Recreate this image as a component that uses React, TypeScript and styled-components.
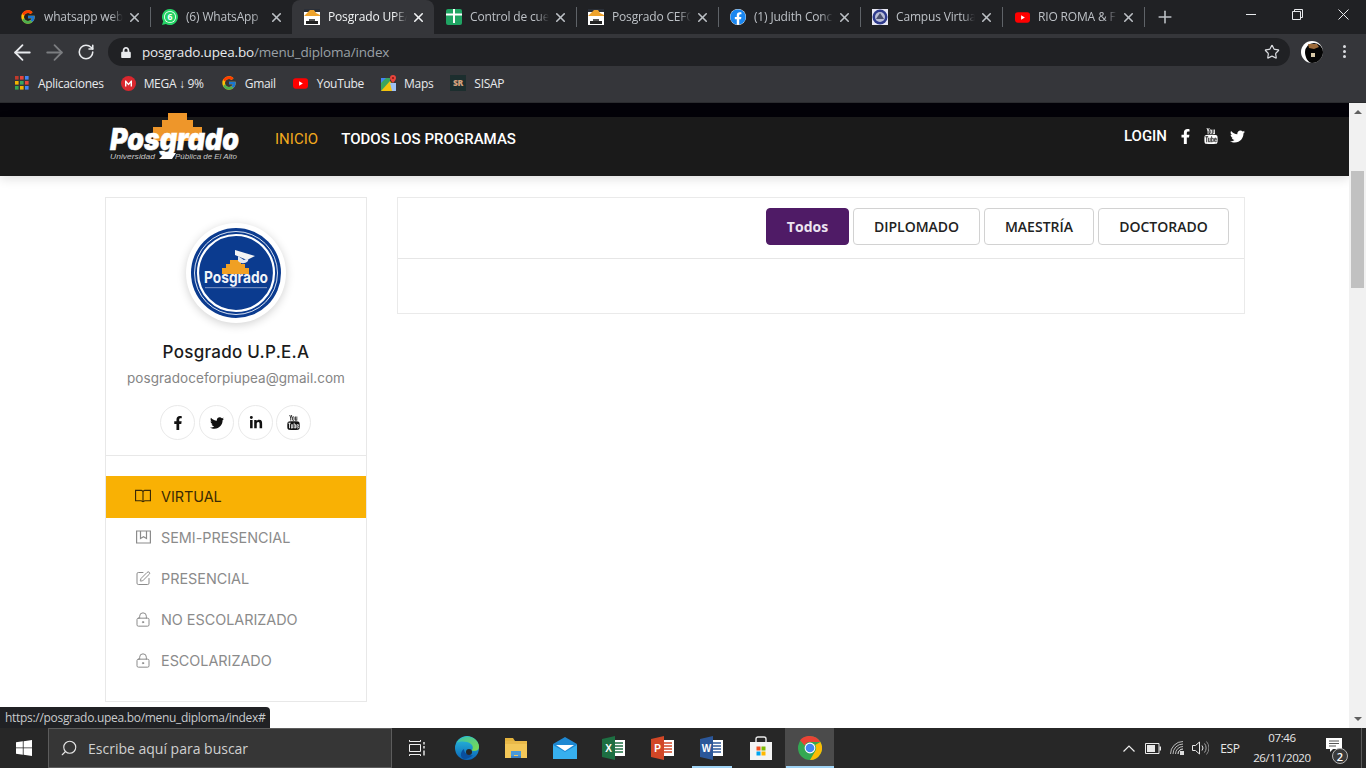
import React from "react";
import styled, { createGlobalStyle } from "styled-components";
import { ArrowLeft, ArrowRight, RotateCw, Star, X, Plus, SquarePen, LockKeyhole, Search } from "lucide-react";
import { FaFacebookF, FaTwitter, FaLinkedinIn, FaFacebook, FaLock } from "react-icons/fa";
import { FcGoogle } from "react-icons/fc";
import { TfiYoutube } from "react-icons/tfi";

const Global = createGlobalStyle`
  html, body { margin: 0; padding: 0; overflow: hidden; background: #fff; }
  * { box-sizing: border-box; }
`;

const Screen = styled.div`
  width: 1366px; height: 768px; display: flex; flex-direction: column; overflow: hidden;
  font-family: "Open Sans", "Liberation Sans", sans-serif;
`;

/* ---------- Browser chrome ---------- */
const TabStrip = styled.div`
  height: 34px; background: #202124; display: flex; padding-left: 8px; flex: none; align-items: stretch;
`;
const Tab = styled.div<{ $active?: boolean; $sep?: boolean }>`
  position: relative; width: 142px; display: flex; align-items: center; padding: 0 8px 0 12px; gap: 8px;
  background: ${p => (p.$active ? "#35363a" : "transparent")};
  border-radius: ${p => (p.$active ? "8px 8px 0 0" : "0")};
  color: ${p => (p.$active ? "#f1f3f4" : "#bdc1c6")};
  &::after {
    content: ""; display: ${p => (p.$sep ? "block" : "none")}; position: absolute; right: -1px; top: 7px; width: 1px; height: 20px; background: #5f6368;
  }
`;
const FavSlot = styled.span`
  width: 16px; height: 16px; flex: none; display: flex; align-items: center; justify-content: center;
`;
const TabTitle = styled.span`
  flex: 1; min-width: 0; white-space: nowrap; overflow: hidden; font-size: 12px; line-height: 16px; letter-spacing: -0.17px;
  -webkit-mask-image: linear-gradient(90deg, #000 84%, transparent 100%);
  mask-image: linear-gradient(90deg, #000 84%, transparent 100%);
`;
const TabClose = styled(X)`
  flex: none; width: 15px; height: 15px; stroke-width: 2.5px; margin-left: -4px;
`;
const NewTab = styled(Plus)`
  margin: 7px 0 0 11px; width: 20px; height: 20px; color: #bdc1c6; stroke-width: 1.9px;
`;
const WindowControls = styled.div`
  margin-left: auto; display: flex; color: #e8eaed;
`;
const WinButton = styled.span`
  width: 46px; height: 28px; display: flex; align-items: center; justify-content: center;
`;

const Toolbar = styled.div`
  height: 32px; background: #35363a; flex: none; display: flex; align-items: flex-end; color: #dadce0; padding-left: 6px;
`;
const NavIconButton = styled.span<{ $dim?: boolean }>`
  width: 32px; height: 28px; display: flex; align-items: center; justify-content: center; color: ${p => (p.$dim ? "#7b7d80" : "#e8eaed")};
`;
const Omnibox = styled.div`
  width: 1182px; margin-left: 6px; height: 28px; background: #202124; border-radius: 14px; display: flex; align-items: center; padding: 0 10px 0 13px;
`;
const LockIcon = styled(FaLock)`
  width: 10px; height: 11px; color: #e8eaed; margin-right: 11px; flex: none;
`;
const UrlText = styled.span`
  font-size: 13.5px; letter-spacing: -0.17px; margin-top: -1px; white-space: nowrap;
`;
const Host = styled.span`
  color: #e8eaed;
`;
const Path = styled.span`
  color: #9aa0a6;
`;
const StarIcon = styled(Star)`
  margin-left: auto; width: 16px; height: 16px; color: #dadce0; stroke-width: 1.8px;
`;
const ProfileDot = styled.span`
  margin: 0 0 3px 11px; flex: none; display: flex;
`;
const MenuDots = styled.span`
  margin: 0 0 8px 20px; display: flex; flex-direction: column; gap: 2px;
  i { width: 3px; height: 3px; border-radius: 50%; background: #dadce0; display: block; }
`;

const BookmarkBar = styled.div`
  height: 37px; background: #35363a; flex: none; display: flex; align-items: center; padding: 0 0 2px 15px; gap: 17px; border-bottom: 1px solid #2b2c2f;
`;
const Bookmark = styled.span<{ $gap: number }>`
  display: flex; align-items: center; gap: ${p => p.$gap}px; font-size: 12px; color: #e8eaed; letter-spacing: -0.3px;
`;

/* ---------- Page ---------- */
const Viewport = styled.div`
  position: relative; flex: 1; min-height: 0; display: flex;
`;
const Page = styled.div`
  flex: 1; min-width: 0; background: #fff; display: flex; flex-direction: column; font-family: Inter, "Liberation Sans", sans-serif;
`;
const TopStrip = styled.div`
  height: 14px; background: #030208; flex: none;
`;
const NavBar = styled.div`
  height: 59px; background: #1a1a1a; display: flex; align-items: flex-start; padding: 0 104px 0 109px; flex: none; box-shadow: 0 3px 10px rgba(0,0,0,.12);
`;
const LogoSvg = styled.svg`
  margin-top: -5px; flex: none; overflow: visible;
`;
const NavLinks = styled.div`
  margin-left: 35px; height: 44px; display: flex; align-items: center; gap: 23px;
`;
const NavLink = styled.span<{ $active?: boolean }>`
  font-family: Roboto, sans-serif; font-size: 15px; font-weight: ${p => (p.$active ? 400 : 500)}; color: ${p => (p.$active ? "#f2aa1e" : "#fff")}; letter-spacing: 0.03px;
`;
const NavRight = styled.div`
  margin-left: auto; height: 38px; display: flex; align-items: center; color: #fff;
`;
const LoginLink = styled.span`
  font-family: Roboto, sans-serif; font-size: 15px; font-weight: 500; margin-right: 6px;
`;
const NavSocial = styled.span`
  display: flex; width: 25px; justify-content: center; &:last-child { margin-left: 6px; width: 16px; }
`;

const Main = styled.div`
  flex: 1; display: flex; align-items: flex-start; gap: 30px; padding: 21px 0 0 105px; overflow: hidden;
`;
const Sidebar = styled.aside`
  width: 262px; flex: none; border: 1px solid #e8e8e8; background: #fff;
`;
const Profile = styled.div`
  display: flex; flex-direction: column; align-items: center; padding: 25px 0 15px; border-bottom: 1px solid #e8e8e8;
`;
const Avatar = styled.div`
  width: 100px; height: 100px; border-radius: 50%; background: #fff; display: flex; align-items: center; justify-content: center;
  box-shadow: 0 2px 10px rgba(0,0,0,.18);
`;
const Name = styled.div`
  margin-top: 18px; font-size: 17px; line-height: 22px; font-weight: 500; color: #1b1b1b; letter-spacing: 0.28px;
`;
const Email = styled.div`
  margin-top: 5px; font-size: 13.5px; line-height: 20px; color: #858585; letter-spacing: 0.05px;
`;
const Socials = styled.div`
  margin-top: 17px; display: flex; gap: 4px; margin-left: -1px;
`;
const SocialCircle = styled.span`
  width: 35px; height: 35px; border: 1px solid #e9e9e9; border-radius: 50%; display: flex; align-items: center; justify-content: center; color: #111;
  &:last-child { margin-left: -1px; }
`;
const Menu = styled.nav`
  padding: 20px 0 19px;
`;
const MenuRow = styled.div<{ $active?: boolean }>`
  height: ${p => (p.$active ? 42 : 41)}px; display: flex; align-items: center; padding: 0 0 2px 29px; gap: 10px;
  background: ${p => (p.$active ? "#f9b104" : "transparent")};
  color: ${p => (p.$active ? "#3a2a05" : "#8b8b8b")};
  font-size: 14.4px; letter-spacing: -0.02px;
`;
const MenuIcon = styled.span`
  width: 16px; height: 18px; display: flex; align-items: center; justify-content: center; flex: none; margin-top: -1px;
`;
const Panel = styled.section`
  width: 848px; height: 117px; flex: none; border: 1px solid #eaeaea; background: #fff;
`;
const PanelHead = styled.div`
  height: 61px; border-bottom: 1px solid #e6e6e6; display: flex; justify-content: flex-end; align-items: flex-start; gap: 4px; padding: 10px 15px 0 0;
`;
const FilterButton = styled.button<{ $w: number; $active?: boolean }>`
  width: ${p => p.$w}px; height: 37px; border-radius: 4px; padding: 0; font-family: "Open Sans", sans-serif; font-size: 14px;
  font-weight: ${p => (p.$active ? 700 : 600)};
  background: ${p => (p.$active ? "#4f1b66" : "#fff")};
  color: ${p => (p.$active ? "#ece4f0" : "#222")};
  border: 1px solid ${p => (p.$active ? "#4f1b66" : "#d2d2d2")};
`;

const Scrollbar = styled.div`
  width: 17px; flex: none; background: #f1f1f1; display: flex; flex-direction: column; align-items: center; position: relative;
`;
const ArrowUp = styled.span`
  margin-top: 7px; width: 0; height: 0; border-left: 4px solid transparent; border-right: 4px solid transparent; border-bottom: 4px solid #606060;
`;
const Thumb = styled.div`
  margin-top: 57px; width: 13px; height: 117px; background: #c1c1c1;
`;
const ArrowDown = styled.span`
  margin-top: auto; margin-bottom: 7px; width: 0; height: 0; border-left: 4px solid transparent; border-right: 4px solid transparent; border-top: 4px solid #606060;
`;
const StatusBubble = styled.div`
  position: absolute; left: 0; bottom: 0; width: 270px; height: 21px; background: #202124; border-top-right-radius: 4px;
  color: #c8cacc; font-size: 12px; line-height: 21px; padding-left: 5px; white-space: nowrap; letter-spacing: -0.3px;
`;

/* ---------- Taskbar ---------- */
const Taskbar = styled.div`
  height: 40px; flex: none; background: #272727; display: flex; align-items: stretch; color: #fff;
`;
const StartButton = styled.span`
  width: 48px; display: flex; align-items: center; justify-content: center; flex: none;
`;
const SearchBox = styled.div`
  width: 344px; flex: none; margin-right: 1px; background: #363636; border: 1px solid #5c5c5c; display: flex; align-items: center; padding-left: 11px; gap: 10px;
  color: #d0d0d0; font-size: 14px;
`;
const SearchIcon = styled(Search)`
  width: 18px; height: 18px; transform: scaleX(-1); color: #e5e5e5; stroke-width: 1.5px;
`;
const TaskButton = styled.span<{ $active?: boolean; $open?: boolean }>`
  position: relative; width: 49px; display: flex; align-items: center; justify-content: center; flex: none;
  background: ${p => (p.$active ? "#4b4b4b" : "transparent")};
  &::after {
    content: ""; display: ${p => (p.$open || p.$active ? "block" : "none")}; position: absolute; bottom: 0; height: 2px; background: #9fd3f5;
    left: ${p => (p.$active ? "1px" : "5px")}; right: ${p => (p.$active ? "0" : "4px")};
  }
`;
const Tray = styled.div`
  margin-left: auto; display: flex; align-items: center; color: #e8e8e8;
`;
const TrayIcon = styled.span<{ $w: number }>`
  width: ${p => p.$w}px; display: flex; justify-content: center; align-items: center;
`;
const Lang = styled.span`
  width: 38px; text-align: center; font-size: 12px; letter-spacing: -0.3px;
`;
const Clock = styled.div`
  width: 64px; margin-left: 1px; text-align: center; font-size: 11.5px; line-height: 20px; letter-spacing: -0.33px;
`;
const Notify = styled.span`
  position: relative; width: 47px; height: 40px; display: flex; align-items: center; justify-content: center;
`;
const NotifyBadge = styled.span`
  position: absolute; left: 18px; top: 20px; width: 16px; height: 16px; border-radius: 50%; background: #3a3a3a; border: 1px solid #b5b5b5;
  display: flex; align-items: center; justify-content: center; font-size: 11px; font-weight: 600; color: #fff;
`;
const ShowDesktop = styled.span`
  width: 5px; height: 40px; border-left: 1px solid #5a5a5a;
`;

/* ---------- Icons ---------- */
const PosgradoFav = () => (
  <svg width="16" height="16" viewBox="0 0 16 16">
    <rect width="16" height="16" fill="#fff" />
    <rect width="16" height="3" fill="#2a2f38" />
    <path d="M0 7 6 1h4l2 3 4 2v1Z" fill="#eea32c" />
    <rect x="2" y="12" width="12" height="3" fill="#222" />
    <rect x="5" y="10" width="6" height="2" fill="#555" />
  </svg>
);
const SheetFav = () => (
  <svg width="16" height="16" viewBox="0 0 16 16">
    <rect width="16" height="16" rx="2" fill="#1fa463" />
    <path d="M0 4.500h16v2H9V14H7V6.500H0Z" fill="#fff" />
    <rect x="7" y="0" width="2" height="5" fill="#fff" />
  </svg>
);
const WhatsFav = () => (
  <svg width="16" height="16" viewBox="0 0 16 16">
    <path d="M8 0a8 8 0 0 0-6.800 12.200L0 16l3.900-1.100A8 8 0 1 0 8 0Z" fill="#25d366" />
    <circle cx="8" cy="8" r="6" fill="#fff" />
    <circle cx="8" cy="8" r="5.200" fill="#25d366" />
    <text x="8" y="11" fontSize="8.500" fontWeight="700" textAnchor="middle" fill="#fff" fontFamily="Open Sans">6</text>
  </svg>
);
const CampusFav = () => (
  <svg width="16" height="16" viewBox="0 0 16 16">
    <rect width="16" height="16" fill="#e8e8f4" />
    <circle cx="8" cy="8" r="7.500" fill="#2e3a8c" />
    <circle cx="8" cy="8" r="5" fill="#b9bdd6" />
    <path d="M4 10 8 4l4 6Z" fill="#4a4f70" />
  </svg>
);
const YoutubeFav = ({ w = 16 }: { w?: number }) => (
  <svg width={w} height="16" viewBox="0 0 16 16">
    <rect x="0" y="3" width="16" height="11" rx="3" fill="#f00" />
    <path d="M6.500 6v5l4-2.500Z" fill="#fff" />
  </svg>
);
const FacebookFav = () => <FaFacebook size={16} color="#1a87f0" style={{ background: "#fff", borderRadius: "50%" }} />;
const AppsIcon = () => (
  <svg width="14" height="14" viewBox="0 0 14 14">
    {[0, 5, 10].flatMap(y =>
      [0, 5, 10].map(x => (
        <rect key={`${x}${y}`} x={x} y={y} width="3.600" height="3.600"
          fill={y === 0 ? (x === 5 ? "#e8453c" : x === 10 ? "#4285f4" : "#c0392b") : y === 5 ? (x === 0 ? "#f4b400" : x === 5 ? "#3ba55d" : "#e8453c") : x === 0 ? "#34a853" : x === 5 ? "#f4b400" : "#4285f4"} />
      ))
    )}
  </svg>
);
const MegaIcon = () => (
  <svg width="15" height="15" viewBox="0 0 15 15">
    <circle cx="7.500" cy="7.500" r="7.500" fill="#d9272e" />
    <path d="M4 10.500v-6h1l2.500 3 2.500-3h1v6H9.600V7L7.500 9.400 5.400 7v3.500Z" fill="#fff" />
  </svg>
);
const MapsIcon = () => (
  <svg width="15" height="16" viewBox="0 0 15 16">
    <path d="M0 3h9v13H0Z" fill="#3ba55d" />
    <path d="M0 16 9 6l6 7v3Z" fill="#f4c20d" />
    <path d="M0 3h5L0 8Z" fill="#4285f4" />
    <path d="M9 8h6v8h-4Z" fill="#9ec1f5" />
    <path d="M12 0a3 3 0 0 0-3 3c0 2 3 5 3 5s3-3 3-5a3 3 0 0 0-3-3Z" fill="#e8453c" />
    <circle cx="12" cy="3" r="1.100" fill="#8b1a14" />
  </svg>
);
const SisapIcon = () => (
  <svg width="16" height="16" viewBox="0 0 16 16">
    <rect width="16" height="16" fill="#1c2e2e" />
    <text x="8" y="11" fontSize="8.500" fontWeight="800" textAnchor="middle" fill="#d2a07c" fontFamily="Open Sans">SR</text>
  </svg>
);
const AvatarSmall = () => (
  <svg width="22" height="22" viewBox="0 0 22 22">
    <circle cx="11" cy="11" r="11" fill="#fff" />
    <path d="M4 11a9 9 0 0 1 18 0 11 11 0 0 1-11 11C7 22 4 16 4 11Z" fill="#050505" />
    <path d="M7 3h9l2 3-5 2-5-1Z" fill="#9b6a3a" />
    <rect x="10" y="12" width="4" height="4" fill="#d8c8a8" />
  </svg>
);
const RestoreIcon = () => (
  <svg width="11" height="11" viewBox="0 0 11 11" fill="none" stroke="currentColor">
    <path d="M.5 2.500h8v8h-8ZM2.500 2.500v-2h8v8h-2" />
  </svg>
);
const MinimizeIcon = () => (
  <svg width="10" height="1" viewBox="0 0 10 1"><rect width="10" height="1" fill="currentColor" /></svg>
);
const CloseIcon = () => (
  <svg width="11" height="11" viewBox="0 0 11 11" stroke="currentColor"><path d="M.5.500l10 10M10.500.500l-10 10" /></svg>
);
const WindowsLogo = () => (
  <svg width="16" height="16" viewBox="0 0 16 16" fill="#fff">
    <path d="M0 2.300 6.800 1.300v6.200H0ZM7.600 1.200 16 0v7.500H7.600ZM0 8.300h6.800v6.400L0 13.700ZM7.600 8.300H16V16l-8.400-1.200Z" />
  </svg>
);
const OpenBook = () => (
  <svg width="17" height="14" viewBox="0 0 17 14" fill="none" stroke="currentColor" strokeWidth="1.200">
    <path d="M.6 1h6.200l1.700 1 1.700-1h6.200v11h-6l-1.900 1-1.900-1h-6Z" />
    <path d="M8.500 2v11" />
  </svg>
);
const SemiBook = () => (
  <svg width="15" height="15" viewBox="0 0 15 15" fill="none" stroke="currentColor" strokeWidth="1.200">
    <path d="M.6 1h13.800v12H.6Z" />
    <path d="M4.500 1v7.500L7.500 6.800l3 1.700V1" />
  </svg>
);

const Logo = () => (
  <LogoSvg width="131" height="50" viewBox="0 0 131 50">
    <path d="M59 1h19v7h6v7h9v14H44V15h9V8h6Z" fill="#ee962a" />
    <text x="1" y="38" textLength="129" lengthAdjust="spacingAndGlyphs" fontFamily="Inter" fontStyle="italic" fontWeight="900" fontSize="30" fill="#fff" stroke="#fff" strokeWidth=".5">Posgrado</text>
    <text x="1" y="47" fontFamily="Liberation Sans" fontStyle="italic" fontSize="7.500" textLength="45" lengthAdjust="spacingAndGlyphs" fill="#c8c8c8">Universidad</text>
    <text x="66" y="47" fontFamily="Liberation Sans" fontStyle="italic" fontSize="7.500" textLength="62" lengthAdjust="spacingAndGlyphs" fill="#c8c8c8">Pública de El Alto</text>
    <path d="M50 47h13l4-6H56Z" fill="#fff" />
  </LogoSvg>
);
const AvatarLogo = () => (
  <svg width="90" height="90" viewBox="0 0 90 90">
    <circle cx="45" cy="45" r="45" fill="#0b3b8f" />
    <circle cx="45" cy="45" r="41.500" fill="none" stroke="#d9e2f2" strokeWidth="1" />
    <circle cx="45" cy="45" r="38" fill="none" stroke="#fff" strokeWidth="2.200" />
    <path d="M31 46v-6h4v-4h4v-4h11v4h4v4h4v6Z" fill="#f0a024" />
    <path d="M44 22l20 6-8 4-12-5Z" fill="#f4f4f4" />
    <path d="M47 28v5c3 3 7 3 10 0l.4-3-4.500 2Z" fill="#e4e8f0" />
    <text x="45" y="55" textAnchor="middle" textLength="64" lengthAdjust="spacingAndGlyphs" fontFamily="Inter" fontWeight="700" fontSize="15.500" fill="#f2f4f8">Posgrado</text>
    <rect x="14" y="59" width="62" height="1.200" fill="#6b86bc" />
  </svg>
);

const EdgeIcon = () => (
  <svg width="24" height="24" viewBox="0 0 24 24">
    <defs>
      <linearGradient id="edgeA" x1="0" y1="0" x2="0" y2="1"><stop offset="0" stopColor="#2ac0dd" /><stop offset="1" stopColor="#0b64b8" /></linearGradient>
      <linearGradient id="edgeB" x1="0" y1="0" x2="1" y2="1"><stop offset="0" stopColor="#37c2b0" /><stop offset="1" stopColor="#7fdc4a" /></linearGradient>
    </defs>
    <circle cx="12" cy="12" r="12" fill="url(#edgeA)" />
    <path d="M2 7C5 1 13-1 19 2.500c4 2.500 6 7 4.500 10.500-1 2-5 2.500-7 1.500 2-2 1.500-5-.5-6.500C12 5 5 5 2 7Z" fill="url(#edgeB)" />
    <path d="M9 13c0 4 4 7 9 6-3 3.500-9 5-11 3-2-3-1-7 2-9Z" fill="#0a4f9e" />
    <circle cx="14" cy="16" r="3" fill="#272727" />
  </svg>
);
const FolderIcon = () => (
  <svg width="24" height="20" viewBox="0 0 24 20">
    <path d="M1 0h8l2 3H1Z" fill="#e4b33d" />
    <rect x="1" y="3" width="22" height="17" fill="#f3c758" />
    <rect x="1" y="3" width="22" height="3" fill="#e9b949" />
    <path d="M7 20v-7h10v7h-3v-3h-4v3Z" fill="#4a9ad8" />
    <rect x="7" y="18" width="10" height="2" fill="#3b82c4" />
  </svg>
);
const MailIcon = () => (
  <svg width="24" height="22" viewBox="0 0 24 22">
    <path d="M12 0 24 7v15H0V7Z" fill="#1e88d2" />
    <path d="M3 8h18l-9 6Z" fill="#fff" />
    <path d="M0 8l12 7 12-7v14H0Z" fill="#37b0ef" />
  </svg>
);
const OfficeIcon = ({ color, letter, lines }: { color: string; letter: string; lines: string }) => (
  <svg width="24" height="24" viewBox="0 0 24 24">
    <rect x="10" y="4" width="13" height="16" fill="#fff" />
    <path d="M12 7h9M12 10h9M12 13h9M12 16h9" stroke={lines} strokeWidth="1.400" />
    <path d="M0 3 13 0v24L0 21Z" fill={color} />
    <text x="6.500" y="16" textAnchor="middle" fontFamily="Liberation Sans" fontWeight="700" fontSize="10" fill="#fff">{letter}</text>
  </svg>
);
const StoreIcon = () => (
  <svg width="24" height="24" viewBox="0 0 24 24">
    <path d="M7 6V3a2 2 0 0 1 2-2h6a2 2 0 0 1 2 2v3" fill="none" stroke="#e9e9e9" strokeWidth="1.400" />
    <path d="M1 6h22v18H1Z" fill="#f4f4f4" />
    <rect x="7.500" y="10.500" width="4" height="4" fill="#f25022" />
    <rect x="12.500" y="10.500" width="4" height="4" fill="#7fba00" />
    <rect x="7.500" y="15.500" width="4" height="4" fill="#00a4ef" />
    <rect x="12.500" y="15.500" width="4" height="4" fill="#ffb900" />
  </svg>
);
const ChromeIcon = () => (
  <svg width="24" height="24" viewBox="0 0 24 24">
    <circle cx="12" cy="12" r="12" fill="#34a853" />
    <path d="M12 0a12 12 0 0 1 10.400 6H12a6 6 0 0 0-5.400 3.400L2 4.300A12 12 0 0 1 12 0Z" fill="#ea4335" />
    <path d="M22.400 6A12 12 0 0 1 12 24l5-8.500A6 6 0 0 0 17.200 9Z" fill="#fbbc05" />
    <circle cx="12" cy="12" r="5.400" fill="#fff" />
    <circle cx="12" cy="12" r="4.300" fill="#4285f4" />
  </svg>
);
const TaskViewIcon = () => (
  <svg width="17" height="16" viewBox="0 0 17 16" fill="none" stroke="#eee">
    <path d="M.5 0v1.500h11V0M.5 16v-1.500h11V16M.5 4.500h11v7H.5Z" />
    <path d="M15 2v2.500M15 6v2.500M15 10.500v5" strokeWidth="1.400" />
  </svg>
);
const BatteryIcon = () => (
  <svg width="16" height="11" viewBox="0 0 16 11">
    <path d="M.5.500h13.500v10H.5Z" fill="none" stroke="#e8e8e8" />
    <rect x="2" y="2" width="8" height="7" fill="#e8e8e8" />
    <rect x="14.500" y="3.500" width="1.500" height="4" fill="#e8e8e8" />
  </svg>
);
const WifiIcon = () => (
  <svg width="14" height="14" viewBox="0 0 14 14" fill="none" stroke="#bbb" strokeWidth="1">
    <path d="M.5 13A12.500 12.500 0 0 1 13 .5M3 13A10 10 0 0 1 13 3M5.500 13A7.500 7.500 0 0 1 13 5.500" />
    <path d="M8 13a5 5 0 0 1 5-5" stroke="#eee" />
    <rect x="10" y="10" width="4" height="4" fill="#ddd" stroke="none" />
  </svg>
);
const VolumeIcon = () => (
  <svg width="17" height="14" viewBox="0 0 17 14" fill="none" stroke="#e8e8e8">
    <path d="M.5 4.500h3L7.500 1v12l-4-3.500h-3Z" />
    <path d="M10 4.500a4 4 0 0 1 0 5" />
    <path d="M12.500 2.500a7 7 0 0 1 0 9" stroke="#aaa" />
    <path d="M14.500.5a10 10 0 0 1 0 13" stroke="#888" />
  </svg>
);
const ChevronTray = () => (
  <svg width="12" height="7" viewBox="0 0 12 7" fill="none" stroke="#eee" strokeWidth="1.200"><path d="M.5 6.500 6 1l5.500 5.500" /></svg>
);
const NotifyIcon = () => (
  <svg width="16" height="14" viewBox="0 0 16 14" style={{ marginTop: -6, marginLeft: -8 }}>
    <path d="M0 0h16v11H7l-3 3v-3H0Z" fill="#fff" />
    <path d="M3 3h10M3 5.500h10M3 8h7" stroke="#555" />
  </svg>
);

const tabs: { title: string; icon: React.ReactNode; active?: boolean; sep?: boolean }[] = [
  { title: "whatsapp web", icon: <FcGoogle size={16} />, sep: true },
  { title: "(6) WhatsApp", icon: <WhatsFav /> },
  { title: "Posgrado UPEA", icon: <PosgradoFav />, active: true },
  { title: "Control de cue", icon: <SheetFav />, sep: true },
  { title: "Posgrado CEFC", icon: <PosgradoFav />, sep: true },
  { title: "(1) Judith Conc", icon: <FacebookFav />, sep: true },
  { title: "Campus Virtua", icon: <CampusFav />, sep: true },
  { title: "RIO ROMA & F", icon: <YoutubeFav w={15} />, sep: true },
];
const bookmarks: { label: string; icon: React.ReactNode; gap: number }[] = [
  { label: "Aplicaciones", icon: <AppsIcon />, gap: 9 },
  { label: "MEGA ↓ 9%", icon: <MegaIcon />, gap: 8 },
  { label: "Gmail", icon: <FcGoogle size={16} />, gap: 8 },
  { label: "YouTube", icon: <YoutubeFav w={15} />, gap: 9 },
  { label: "Maps", icon: <MapsIcon />, gap: 8 },
  { label: "SISAP", icon: <SisapIcon />, gap: 8 },
];
const menu: { label: string; icon: React.ReactNode; active?: boolean }[] = [
  { label: "VIRTUAL", icon: <OpenBook />, active: true },
  { label: "SEMI-PRESENCIAL", icon: <SemiBook /> },
  { label: "PRESENCIAL", icon: <SquarePen size={17} strokeWidth={1.5} /> },
  { label: "NO ESCOLARIZADO", icon: <LockKeyhole size={17} strokeWidth={1.5} /> },
  { label: "ESCOLARIZADO", icon: <LockKeyhole size={17} strokeWidth={1.5} /> },
];
const filters = [
  { label: "Todos", w: 83, active: true },
  { label: "DIPLOMADO", w: 127 },
  { label: "MAESTRÍA", w: 110 },
  { label: "DOCTORADO", w: 131 },
];

export default function App() {
  return (
    <Screen>
      <Global />
      <TabStrip>
        {tabs.map(t => (
          <Tab key={t.title} $active={t.active} $sep={t.sep}>
            <FavSlot>{t.icon}</FavSlot>
            <TabTitle>{t.title}</TabTitle>
            <TabClose />
          </Tab>
        ))}
        <NewTab />
        <WindowControls>
          <WinButton><MinimizeIcon /></WinButton>
          <WinButton><RestoreIcon /></WinButton>
          <WinButton><CloseIcon /></WinButton>
        </WindowControls>
      </TabStrip>
      <Toolbar>
        <NavIconButton><ArrowLeft size={25} strokeWidth={1.7} /></NavIconButton>
        <NavIconButton $dim><ArrowRight size={25} strokeWidth={1.7} /></NavIconButton>
        <NavIconButton><RotateCw size={18} strokeWidth={2.1} /></NavIconButton>
        <Omnibox>
          <LockIcon />
          <UrlText><Host>posgrado.upea.bo</Host><Path>/menu_diploma/index</Path></UrlText>
          <StarIcon />
        </Omnibox>
        <ProfileDot><AvatarSmall /></ProfileDot>
        <MenuDots><i /><i /><i /></MenuDots>
      </Toolbar>
      <BookmarkBar>
        {bookmarks.map(b => (
          <Bookmark key={b.label} $gap={b.gap}>{b.icon}{b.label}</Bookmark>
        ))}
      </BookmarkBar>
      <Viewport>
        <Page>
          <TopStrip />
          <NavBar>
            <Logo />
            <NavLinks>
              <NavLink $active>INICIO</NavLink>
              <NavLink>TODOS LOS PROGRAMAS</NavLink>
            </NavLinks>
            <NavRight>
              <LoginLink>LOGIN</LoginLink>
              <NavSocial><FaFacebookF size={15} /></NavSocial>
              <NavSocial><TfiYoutube size={16} /></NavSocial>
              <NavSocial><FaTwitter size={15} /></NavSocial>
            </NavRight>
          </NavBar>
          <Main>
            <Sidebar>
              <Profile>
                <Avatar><AvatarLogo /></Avatar>
                <Name>Posgrado U.P.E.A</Name>
                <Email>posgradoceforpiupea@gmail.com</Email>
                <Socials>
                  <SocialCircle><FaFacebookF size={14} /></SocialCircle>
                  <SocialCircle><FaTwitter size={14} /></SocialCircle>
                  <SocialCircle><FaLinkedinIn size={14} /></SocialCircle>
                  <SocialCircle><TfiYoutube size={15} /></SocialCircle>
                </Socials>
              </Profile>
              <Menu>
                {menu.map(m => (
                  <MenuRow key={m.label} $active={m.active}>
                    <MenuIcon>{m.icon}</MenuIcon>
                    {m.label}
                  </MenuRow>
                ))}
              </Menu>
            </Sidebar>
            <Panel>
              <PanelHead>
                {filters.map(f => (
                  <FilterButton key={f.label} $w={f.w} $active={f.active}>{f.label}</FilterButton>
                ))}
              </PanelHead>
            </Panel>
          </Main>
        </Page>
        <Scrollbar>
          <ArrowUp />
          <Thumb />
          <ArrowDown />
        </Scrollbar>
        <StatusBubble>https://posgrado.upea.bo/menu_diploma/index#</StatusBubble>
      </Viewport>
      <Taskbar>
        <StartButton><WindowsLogo /></StartButton>
        <SearchBox><SearchIcon />Escribe aquí para buscar</SearchBox>
        <TaskButton><TaskViewIcon /></TaskButton>
        <TaskButton><EdgeIcon /></TaskButton>
        <TaskButton><FolderIcon /></TaskButton>
        <TaskButton><MailIcon /></TaskButton>
        <TaskButton><OfficeIcon color="#1d6f42" letter="X" lines="#1d6f42" /></TaskButton>
        <TaskButton><OfficeIcon color="#d24726" letter="P" lines="#d24726" /></TaskButton>
        <TaskButton $open><OfficeIcon color="#2b579a" letter="W" lines="#2b579a" /></TaskButton>
        <TaskButton><StoreIcon /></TaskButton>
        <TaskButton $active><ChromeIcon /></TaskButton>
        <Tray>
          <TrayIcon $w={24}><ChevronTray /></TrayIcon>
          <TrayIcon $w={24}><BatteryIcon /></TrayIcon>
          <TrayIcon $w={24}><WifiIcon /></TrayIcon>
          <TrayIcon $w={22}><VolumeIcon /></TrayIcon>
          <Lang>ESP</Lang>
          <Clock>07:46<br />26/11/2020</Clock>
          <Notify><NotifyIcon /><NotifyBadge>2</NotifyBadge></Notify>
          <ShowDesktop />
        </Tray>
      </Taskbar>
    </Screen>
  );
}
